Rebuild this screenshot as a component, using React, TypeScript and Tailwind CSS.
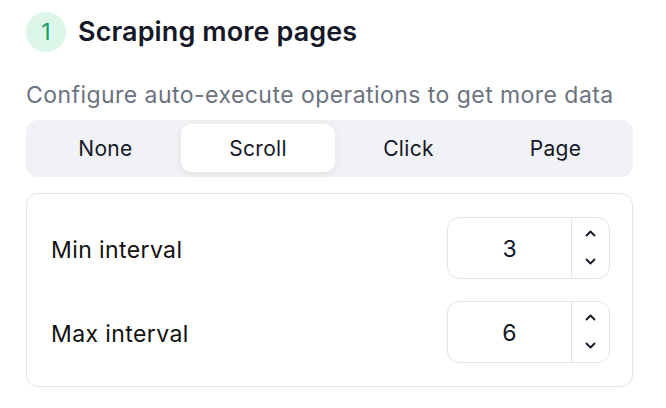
import { useState } from "react";

const tabs = ["None", "Scroll", "Click", "Page"];

function Chevron({ up }: { up?: boolean }) {
  return (
    <svg width="11" height="7" viewBox="0 0 11 7" fill="none">
      <path
        d={up ? "M1.5 5.5 L5.5 1.5 L9.5 5.5" : "M1.5 1.5 L5.5 5.5 L9.5 1.5"}
        stroke="#111827"
        strokeWidth="1.8"
        strokeLinecap="round"
        strokeLinejoin="round"
      />
    </svg>
  );
}

function NumberField({ value }: { value: number }) {
  return (
    <div className="flex h-[62px] w-[163px] rounded-xl border-[1.5px] border-[#e3e4e8] bg-white">
      <div className="flex flex-1 items-center justify-center pt-1 text-[23px] text-[#111827]">
        {value}
      </div>
      <div className="flex w-[38px] flex-col border-l-[1.5px] border-[#e3e4e8]">
        <div className="flex flex-1 items-center justify-center pt-0.5">
          <Chevron up />
        </div>
        <div className="flex flex-1 items-center justify-center pb-0.5">
          <Chevron />
        </div>
      </div>
    </div>
  );
}

export default function App() {
  const [active, setActive] = useState("Scroll");

  return (
    <div
      className="h-[408px] w-[666px] bg-white pl-[26px] pr-[33px] pt-3"
      style={{ fontFamily: "Inter, 'Noto Sans', sans-serif" }}
    >
      {/* Header */}
      <div className="flex items-center gap-3">
        <div className="flex h-10 w-10 items-center justify-center rounded-full bg-[#dcf6ea] text-[23px] text-[#17a05d]">
          1
        </div>
        <h2 className="text-[27px] font-semibold tracking-[0.1px] text-[#151827]">
          Scraping more pages
        </h2>
      </div>

      <p className="mt-[28px] text-[23px] leading-7 tracking-[0.45px] text-[#6b7280]">
        Configure auto-execute operations to get more data
      </p>

      {/* Segmented */}
      <div className="mt-[11px] grid h-[57px] grid-cols-[151fr_154fr_147fr_147fr] rounded-xl bg-[#f1f2f6] px-1 pb-[5px] pt-1">
        {tabs.map((tab) => (
          <button
            key={tab}
            onClick={() => setActive(tab)}
            className={
              active === tab
                ? "rounded-[10px] bg-white pt-0.5 text-[21px] tracking-[0.3px] text-[#151827] shadow-[0_2px_8px_rgba(0,0,0,0.07)]"
                : "rounded-[10px] pt-0.5 text-[21px] tracking-[0.3px] text-[#151827]"
            }
          >
            {tab}
          </button>
        ))}
      </div>

      {/* Interval card */}
      <div className="mt-4 flex flex-col gap-[22px] rounded-xl border-[1.5px] border-[#e3e4e8] py-[23px] pl-6 pr-[22px]">
        <div className="flex items-center justify-between">
          <span className="pt-[6px] text-[23px] tracking-[0.4px] text-[#111]">Min interval</span>
          <NumberField value={3} />
        </div>
        <div className="flex items-center justify-between">
          <span className="pt-[6px] text-[23px] tracking-[0.4px] text-[#111]">Max interval</span>
          <NumberField value={6} />
        </div>
      </div>
    </div>
  );
}
